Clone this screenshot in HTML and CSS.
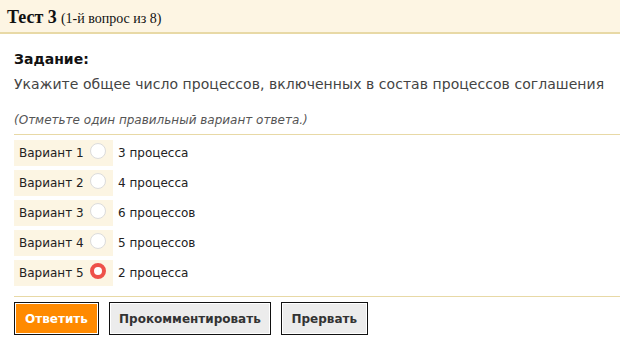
FILE: index.html
```html
<!DOCTYPE html>
<html lang="ru">
  <head>
    <meta charset="UTF-8" />
    <title>Тест 3</title>
    <link rel="stylesheet" href="styles.css">
  </head>
  <body>
    <div class="head">
      <span class="title">Тест 3</span>
      <span class="count">(1-й вопрос из 8)</span>
    </div>

    <div class="task">
      <h2>Задание:</h2>
      <p class="question">Укажите общее число процессов, включенных в состав процессов соглашения</p>
      <p class="hint">(Отметьте один правильный вариант ответа.)</p>

      <div class="answers">
        <label class="row">
          <span class="variant">Вариант 1 <input type="radio" name="q1"></span>
          <span class="text">3 процесса</span>
        </label>
        <label class="row">
          <span class="variant">Вариант 2 <input type="radio" name="q1"></span>
          <span class="text">4 процесса</span>
        </label>
        <label class="row">
          <span class="variant">Вариант 3 <input type="radio" name="q1"></span>
          <span class="text">6 процессов</span>
        </label>
        <label class="row">
          <span class="variant">Вариант 4 <input type="radio" name="q1"></span>
          <span class="text">5 процессов</span>
        </label>
        <label class="row">
          <span class="variant">Вариант 5 <input type="radio" name="q1" checked></span>
          <span class="text">2 процесса</span>
        </label>
      </div>

      <div class="buttons">
        <button class="btn btn-main">Ответить</button>
        <button class="btn">Прокомментировать</button>
        <button class="btn btn-stop">Прервать</button>
      </div>
    </div>
  </body>
</html>
```

FILE: styles.css
```css
* {
  margin: 0;
  padding: 0;
  box-sizing: border-box;
}
body {
  background: #fff;
  font-family: "DejaVu Sans", sans-serif;
  color: #222;
}
/* шапка теста */
.head {
  height: 34px;
  padding: 6px 7px 0;
  background-color: #fdf5e3;
  border-bottom: 2px solid #e8d9a6;
  font-family: "Liberation Serif", serif;
  line-height: 22px;
  color: #111;
}
.title {
  font-size: 18px;
  font-weight: bold;
}
.count {
  font-size: 14px;
}
/* задание */
.task {
  padding-left: 14px;
}
.task h2 {
  margin-top: 17px;
  font-size: 14px;
  line-height: 17px;
  color: #111;
}
.question {
  margin-top: 6px;
  font-size: 14px;
  line-height: 20px;
  color: #444;
  white-space: nowrap;
  letter-spacing: 0.05px;
}
.hint {
  margin-top: 18px;
  padding-bottom: 6px;
  font-size: 12px;
  line-height: 16px;
  font-style: italic;
  color: #555;
  border-bottom: 1px solid #e8d9a6;
}
/* варианты ответа */
.answers {
  display: flex;
  flex-direction: column;
  gap: 4px;
  padding: 5px 0 10px;
  border-bottom: 1px solid #e8d9a6;
}
.row {
  display: flex;
  align-items: center;
  height: 26px;
  font-size: 12px;
}
.variant {
  display: flex;
  align-items: center;
  width: 99px;
  height: 26px;
  padding-left: 5px;
  background-color: #fcf5e3;
  color: #222;
  white-space: pre;
}
.variant input {
  appearance: none;
  flex: none;
  width: 16px;
  height: 16px;
  margin: 0 0 4px 3px;
  border: 1px solid #dcdcdc;
  border-radius: 50%;
  background: #fff;
}
.variant input:checked {
  border: 4.5px solid #ee5149;
  background: #fff;
}
.text {
  margin-left: 5px;
  color: #222;
}
/* кнопки */
.buttons {
  display: flex;
  gap: 10px;
  padding-top: 5px;
}
.btn {
  height: 33px;
  padding: 0 9px;
  border: 1px solid #111;
  box-shadow: inset 0 0 0 1px #fff;
  background-color: #ececec;
  font-family: "DejaVu Sans", sans-serif;
  font-size: 12px;
  font-weight: bold;
  color: #333;
}
.btn-main {
  width: 85px;
  background-color: #ff8a00;
  color: #fff;
}
.btn-stop {
  width: 87px;
}
```
